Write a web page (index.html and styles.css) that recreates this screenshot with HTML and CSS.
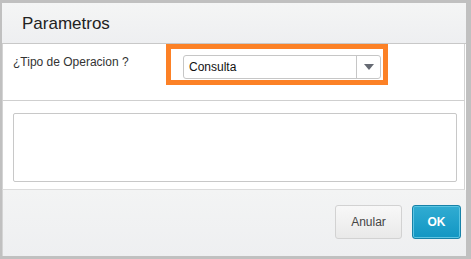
FILE: index.html
```html
<!DOCTYPE html>
<html lang="es">
<head>
    <meta charset="UTF-8">
    <title>Parametros</title>
    <link rel="stylesheet" href="styles.css">
</head>
<body>
    <div class="dialog">
        <header class="dialog-header">
            <h1>Parametros</h1>
        </header>

        <div class="params">
            <label class="param-label" for="tipoOperacion">¿Tipo de Operacion ?</label>
            <div class="param-field highlighted">
                <div class="combo" id="tipoOperacion">
                    <span class="combo-value">Consulta</span>
                    <span class="combo-arrow"></span>
                </div>
            </div>
        </div>

        <div class="notes">
            <div class="notes-box"></div>
        </div>

        <footer class="dialog-footer">
            <button class="btn btn-cancel">Anular</button>
            <button class="btn btn-ok">OK</button>
        </footer>
    </div>
</body>
</html>
```

FILE: styles.css
```css
* {
    margin: 0;
    padding: 0;
    box-sizing: border-box;
}

body {
    background-color: #c0c0c0;
    font-family: Arial, "Liberation Sans", sans-serif;
    color: #333;
    padding: 3px 5px 3px 2px;
    height: 259px;
    overflow: hidden;
}

.dialog {
    width: 464px;
    height: 253px;
    background-color: #fff;
    display: flex;
    flex-direction: column;
}

.dialog-header {
    height: 41px;
    background: linear-gradient(#f4f5f5, #eeeff1);
    border-bottom: 1px solid #c8c8c8;
    padding: 11px 0 0 20px;
}

.dialog-header h1 {
    font-size: 17px;
    font-weight: normal;
    color: #222;
    line-height: 20px;
}

.params {
    height: 57px;
    display: flex;
    border-left: 1px solid #d4d4d4;
    border-right: 1px solid #d4d4d4;
    margin-right: 1px;
    border-bottom: 1px solid #cfcfcf;
}

.param-label {
    width: 163px;
    padding: 11px 0 0 10px;
    font-size: 12px;
    line-height: 14px;
    color: #333;
}

.param-field {
    width: 222px;
    height: 41px;
    padding: 6px 2px 0 12px;
}

.highlighted {
    border: 5px solid #fc8126;
}

.combo {
    width: 198px;
    height: 24px;
    border: 1px solid #c6c6c6;
    border-radius: 3px;
    display: flex;
    align-items: center;
    background-color: #fff;
}

.combo-value {
    flex: 1;
    padding-left: 5px;
    font-size: 12px;
    color: #111;
}

.combo-arrow {
    width: 24px;
    height: 100%;
    border-left: 1px solid #c6c6c6;
    display: flex;
    align-items: center;
    justify-content: center;
}

.combo-arrow::after {
    content: "";
    border-left: 5px solid transparent;
    border-right: 5px solid transparent;
    border-top: 6px solid #666a73;
}

.notes {
    height: 89px;
    padding: 12px 7px 0 10px;
    border-left: 1px solid #d4d4d4;
    border-right: 1px solid #d4d4d4;
    margin-right: 1px;
    border-bottom: 1px solid #dcdcdc;
}

.notes-box {
    height: 69px;
    border: 1px solid #c8c8c8;
    border-radius: 2px;
}

.dialog-footer {
    flex: 1;
    background: linear-gradient(#f3f4f4, #eeeff1);
    border-left: 1px solid #d4d4d4;
    display: flex;
    justify-content: flex-end;
    align-items: flex-start;
    gap: 10px;
    padding: 15px 5px 0 0;
}

.btn {
    height: 34px;
    border-radius: 3px;
    font-family: Arial, "Liberation Sans", sans-serif;
    font-size: 12px;
    cursor: pointer;
}

.btn-cancel {
    width: 67px;
    border: 1px solid #d2d2d2;
    background: linear-gradient(#f8f8f8, #e9e9e9);
    color: #444;
}

.btn-ok {
    width: 49px;
    border: 1px solid #1782a8;
    box-shadow: inset 0 0 0 1px #5cc4e2;
    background: linear-gradient(#31acd2, #1196c3);
    color: #fff;
    font-weight: bold;
}
```
